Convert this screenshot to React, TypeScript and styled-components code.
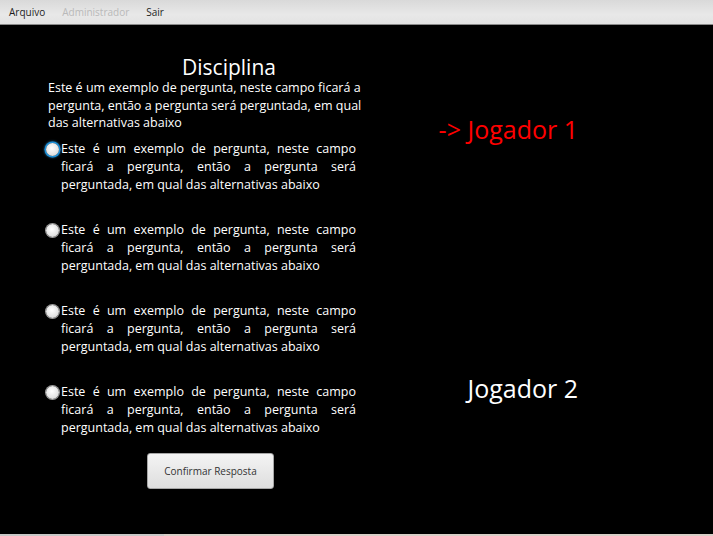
import React from "react";
import styled, { createGlobalStyle } from "styled-components";

const Global = createGlobalStyle`
  html, body { margin: 0; padding: 0; background: #000; }
  body { font-family: "Open Sans", "Noto Sans", sans-serif; }
`;

const Window = styled.div`
  width: 713px;
  height: 536px;
  display: flex;
  flex-direction: column;
  background: #000;
  overflow: hidden;
`;

const MenuBar = styled.div`
  height: 24px;
  flex: none;
  display: flex;
  align-items: center;
  padding-left: 1px;
  background: linear-gradient(#d9d9d9, #e8e8e8 60%, #e3e3e3);
  border-bottom: 1px solid #8a8a8a;
`;

const MenuItem = styled.span<{ $disabled?: boolean }>`
  font-size: 10px;
  padding: 0 8px;
  margin-right: 1px;
  color: ${(p) => (p.$disabled ? "#b9b9b9" : "#1e1e1e")};
`;

const Main = styled.div`
  flex: 1;
  display: grid;
  grid-template-columns: 410px 1fr;
`;

const LeftCol = styled.div`
  display: flex;
  flex-direction: column;
  padding: 30px 0 0 46px;
`;

const Title = styled.h1`
  margin: 0;
  font-weight: 400;
  font-size: 21px;
  line-height: 24px;
  color: #fff;
  text-align: center;
  padding-left: 2px;
`;

const Question = styled.p`
  margin: 0 0 0 2px;
  width: 325px;
  font-size: 12.5px;
  line-height: 17.5px;
  color: #fff;
`;

const Options = styled.div`
  display: flex;
  flex-direction: column;
  gap: 27px;
  margin-top: 8px;
`;

const Option = styled.label`
  display: flex;
  align-items: flex-start;
  width: 310px;
`;

const Radio = styled.span<{ $focused?: boolean }>`
  flex: none;
  width: 13px;
  height: 13px;
  margin-top: 3px;
  margin-right: 2px;
  border-radius: 50%;
  background: radial-gradient(circle at 45% 40%, #ffffff, #e6e6e6 55%, #c8c8c8);
  box-shadow: ${(p) =>
    p.$focused ? "0 0 0 1.5px #1e8fd6, 0 0 2px 2px rgba(40,150,220,0.6)" : "0 0 0 1px #9a9a9a"};
`;

const OptionText = styled.span`
  font-size: 12.5px;
  line-height: 18px;
  color: #fff;
  text-align: justify;
`;

const ButtonRow = styled.div`
  display: flex;
  margin-top: 16px;
  padding-left: 101px;
`;

const Button = styled.button`
  width: 127px;
  height: 36px;
  border: 1px solid #a6a6a6;
  border-radius: 3px;
  background: linear-gradient(#f4f4f4, #dedede);
  font-family: "Open Sans", sans-serif;
  font-size: 10px;
  color: #333;
  padding: 0;
`;

const RightCol = styled.div`
  display: flex;
  flex-direction: column;
  align-items: flex-start;
  padding-top: 88px;
`;

const Player = styled.div<{ $active?: boolean }>`
  width: 168px;
  text-align: right;
  font-size: 25px;
  line-height: 32px;
  color: ${(p) => (p.$active ? "#ff0000" : "#fff")};
`;

const Spacer = styled.div`
  height: 227px;
`;

const BottomStrip = styled.div`
  height: 2px;
  flex: none;
  background: linear-gradient(90deg, #c8c8c8 23%, #d8cfc8 23%);
`;

const TEXT =
  "Este é um exemplo de pergunta, neste campo ficará a pergunta, então a pergunta será perguntada, em qual das alternativas abaixo";

export default function App() {
  return (
    <Window>
      <Global />
      <MenuBar>
        <MenuItem>Arquivo</MenuItem>
        <MenuItem $disabled>Administrador</MenuItem>
        <MenuItem>Sair</MenuItem>
      </MenuBar>
      <Main>
        <LeftCol>
          <Title>Disciplina</Title>
          <Question>{TEXT}</Question>
          <Options>
            {[0, 1, 2, 3].map((i) => (
              <Option key={i}>
                <Radio $focused={i === 0} />
                <OptionText>{TEXT}</OptionText>
              </Option>
            ))}
          </Options>
          <ButtonRow>
            <Button>Confirmar Resposta</Button>
          </ButtonRow>
        </LeftCol>
        <RightCol>
          <Player $active>-&gt; Jogador 1</Player>
          <Spacer />
          <Player>Jogador 2</Player>
        </RightCol>
      </Main>
      <BottomStrip />
    </Window>
  );
}
